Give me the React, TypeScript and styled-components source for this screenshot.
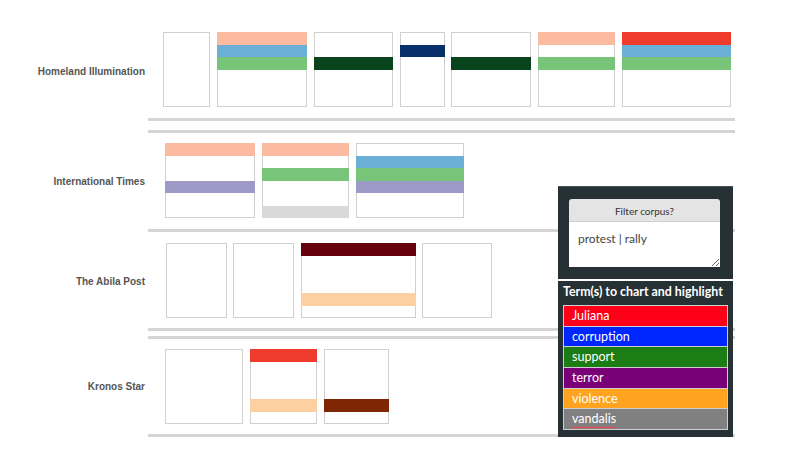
import React from 'react';
import styled, { createGlobalStyle } from 'styled-components';

const GlobalStyle = createGlobalStyle`
  body {
    margin: 0;
    background: #ffffff;
    font-family: "Liberation Sans", Arial, sans-serif;
  }
`;

const Page = styled.div`
  position: relative;
  width: 791px;
  height: 466px;
  padding-top: 21px;
  box-sizing: border-box;
  overflow: hidden;
`;

const Row = styled.div<{ $gap: number }>`
  display: flex;
  align-items: center;
  margin-top: ${p => p.$gap}px;
`;

const Label = styled.div`
  width: 145px;
  margin-right: 3px;
  text-align: right;
  font-size: 10px;
  font-weight: bold;
  color: #555555;
`;

const Track = styled.div<{ $top: boolean; $bottom: boolean; $pt: number; $pb: number; $indent: number }>`
  width: 587px;
  box-sizing: border-box;
  display: flex;
  gap: 6.7px;
  padding: ${p => p.$pt}px 0 ${p => p.$pb}px ${p => p.$indent}px;
  border-top: ${p => (p.$top ? '3px solid #d5d5d5' : 'none')};
  border-bottom: ${p => (p.$bottom ? '3px solid #d5d5d5' : 'none')};
`;

const Box = styled.div<{ $w: number }>`
  flex: none;
  width: ${p => p.$w}px;
  height: 75px;
  display: grid;
  grid-template-rows: repeat(6, 1fr);
  background: #ffffff;
  box-shadow: inset 0 0 0 1px #d0d0d0;
`;

const Band = styled.div<{ $slot: number; $color: string }>`
  grid-row: ${p => p.$slot + 1};
  grid-column: 1;
  background: ${p => p.$color};
`;

const Panel = styled.div<{ $top: number; $height: number }>`
  position: absolute;
  left: 558px;
  top: ${p => p.$top}px;
  width: 175px;
  height: ${p => p.$height}px;
  box-sizing: border-box;
  background: #263136;
`;

const FilterPanel = styled(Panel)`
  padding: 12px 13px 12px 11px;
  border-top: 1px solid #46525a;
`;

const FilterButton = styled.button`
  display: block;
  width: 100%;
  height: 23px;
  border: none;
  border-radius: 3px 3px 0 0;
  background: #e4e4e4;
  color: #333333;
  font-family: Lato, "Open Sans", sans-serif;
  font-size: 10px;
  box-shadow: inset 0 -1px 0 #cfcfcf;
`;

const FilterInput = styled.textarea`
  display: block;
  width: 100%;
  height: 45px;
  box-sizing: border-box;
  margin: 0;
  border: none;
  border-radius: 0;
  padding: 9px 9px 6px;
  background: #ffffff;
  color: #444444;
  font-family: Lato, "Open Sans", sans-serif;
  font-size: 12px;
  outline: none;
`;

const TermsPanel = styled(Panel)`
  padding: 2px 5px 6px 5px;
`;

const TermsTitle = styled.div`
  color: #ffffff;
  font-family: Lato, "Open Sans", sans-serif;
  font-weight: bold;
  font-size: 12.4px;
  line-height: 18px;
  margin-bottom: 4px;
  white-space: nowrap;
`;

const TermList = styled.div`
  border: 1px solid #cfcfcf;
  display: flex;
  flex-direction: column;
`;

const Term = styled.div<{ $color: string; $misspelled?: boolean }>`
  height: 19.7px;
  line-height: 19.7px;
  padding-left: 8px;
  background: ${p => p.$color};
  color: #ffffff;
  font-family: Lato, "Open Sans", sans-serif;
  font-size: 12.5px;
  & + & {
    border-top: 1px solid #cfcfcf;
  }
  span {
    text-decoration: ${p => (p.$misspelled ? 'underline dotted #e0404a' : 'none')};
    text-underline-offset: 3px;
  }
`;

const C = {
  salmon: '#fcbba1',
  red: '#ef3b2c',
  maroon: '#67000d',
  blue: '#6baed6',
  navy: '#08306b',
  green: '#78c479',
  darkGreen: '#0a441d',
  purple: '#9e9ac8',
  peach: '#fdd0a2',
  brown: '#7f2704',
  gray: '#d9d9d9',
};

type Strip = { w: number; bands: [number, string][] };

interface Paper {
  name: string;
  gap: number;
  top: boolean;
  bottom: boolean;
  pt: number;
  pb: number;
  indent: number;
  strips: Strip[];
}

const papers: Paper[] = [
  {
    name: 'Homeland Illumination',
    gap: 0, top: false, bottom: true, pt: 11, pb: 11, indent: 15,
    strips: [
      { w: 47, bands: [] },
      { w: 90.3, bands: [[0, C.salmon], [1, C.blue], [2, C.green]] },
      { w: 79.3, bands: [[2, C.darkGreen]] },
      { w: 45, bands: [[1, C.navy]] },
      { w: 79.7, bands: [[2, C.darkGreen]] },
      { w: 77.7, bands: [[0, C.salmon], [2, C.green]] },
      { w: 108.7, bands: [[0, C.red], [1, C.blue], [2, C.green]] },
    ],
  },
  {
    name: 'International Times',
    gap: 9, top: true, bottom: true, pt: 10, pb: 11, indent: 17,
    strips: [
      { w: 90, bands: [[0, C.salmon], [3, C.purple]] },
      { w: 87.7, bands: [[0, C.salmon], [2, C.green], [5, C.gray]] },
      { w: 107.7, bands: [[1, C.blue], [2, C.green], [3, C.purple]] },
    ],
  },
  {
    name: 'The Abila Post',
    gap: 0, top: false, bottom: true, pt: 11, pb: 10, indent: 18,
    strips: [
      { w: 60.7, bands: [] },
      { w: 61, bands: [] },
      { w: 114.7, bands: [[0, C.maroon], [4, C.peach]] },
      { w: 69.3, bands: [] },
    ],
  },
  {
    name: 'Kronos Star',
    gap: 5, top: true, bottom: true, pt: 10, pb: 10, indent: 17,
    strips: [
      { w: 78.3, bands: [] },
      { w: 67.3, bands: [[0, C.red], [4, C.peach]] },
      { w: 65.3, bands: [[4, C.brown]] },
    ],
  },
];

const terms = [
  { label: 'Juliana', color: '#ff0019' },
  { label: 'corruption', color: '#0026ff' },
  { label: 'support', color: '#1b7d14' },
  { label: 'terror', color: '#7a0078' },
  { label: 'violence', color: '#ffa321' },
  { label: 'vandalis', color: '#808080', misspelled: true },
];

export default function App() {
  return (
    <Page>
      <GlobalStyle />
      {papers.map(paper => (
        <Row key={paper.name} $gap={paper.gap}>
          <Label>{paper.name}</Label>
          <Track
            $top={paper.top}
            $bottom={paper.bottom}
            $pt={paper.pt}
            $pb={paper.pb}
            $indent={paper.indent}
          >
            {paper.strips.map((strip, i) => (
              <Box key={i} $w={strip.w}>
                {strip.bands.map(([slot, color]) => (
                  <Band key={slot} $slot={slot} $color={color} />
                ))}
              </Box>
            ))}
          </Track>
        </Row>
      ))}

      <FilterPanel $top={186} $height={93}>
        <FilterButton type="button">Filter corpus?</FilterButton>
        <FilterInput defaultValue="protest | rally" spellCheck={false} />
      </FilterPanel>

      <TermsPanel $top={281} $height={156}>
        <TermsTitle>Term(s) to chart and highlight</TermsTitle>
        <TermList>
          {terms.map(t => (
            <Term key={t.label} $color={t.color} $misspelled={t.misspelled}>
              <span>{t.label}</span>
            </Term>
          ))}
        </TermList>
      </TermsPanel>
    </Page>
  );
}
